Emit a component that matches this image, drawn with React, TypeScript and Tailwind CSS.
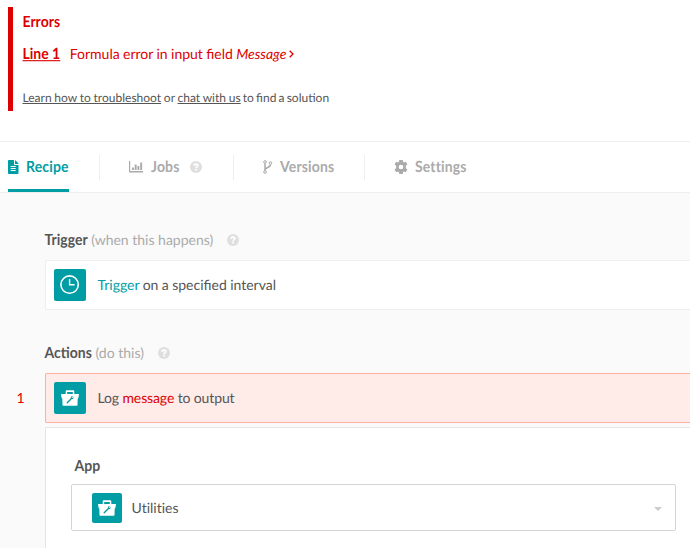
import type { ReactNode } from "react";

function FileIcon() {
  return (
    <svg className="block h-[14px] w-[11px] shrink-0" viewBox="0 0 11 14">
      <path fill="currentColor" fillRule="evenodd" d="M.8 0H6v4.2c0 .5.3.8.8.8H10.500v8.2c0 .5-.3.8-.8.8H.8c-.5 0-.8-.3-.8-.8V.8C0 .3.3 0 .8 0zM2.700 6v1h5v-1zm0 2v1h5v-1zm0 2v1h5v-1z" />
      <path fill="currentColor" d="M7 .1c.2.1.4.2.5.3l2.700 2.700c.1.100.2.300.3.900H7z" />
    </svg>
  );
}

function ChartIcon() {
  return (
    <svg className="block h-3 w-[15px] shrink-0" viewBox="0 0 15 12">
      <path fill="currentColor" d="M0 0h1.200v10H14v1.500H0zM3 6.500h1.900V9H3zM5.700 3.500h1.900V9H5.700zM8.400 5h1.900v4H8.400zM11.200 1.500h1.900V9h-1.900z" />
    </svg>
  );
}

function BranchIcon() {
  return (
    <svg className="block h-[14px] w-[10px] shrink-0" viewBox="0 0 10 14" fill="none" stroke="currentColor">
      <circle cx="2" cy="2" r="1.300" />
      <circle cx="7.500" cy="3" r="1.300" />
      <circle cx="2" cy="12" r="1.300" />
      <path strokeWidth="1.500" d="M2 3.400v7.200M7.500 4.400c0 3.600-5.100 2.600-5.500 5.600" />
    </svg>
  );
}

function GearIcon() {
  return (
    <svg className="block h-[14px] w-[14px] shrink-0" viewBox="0 0 24 24">
      <path fill="currentColor" fillRule="evenodd" d="M9 0h6l.4 3.200 1.700 1 3.200-1.300 2.700 4.700-2.700 2.100v4.600l2.700 2.100-2.700 4.700-3.200-1.300-1.700 1L15 24H9l-.4-3.200-1.700-1-3.200 1.300L1 16.400l2.700-2.100V9.700L1 7.600l2.700-4.700 3.200 1.300 1.700-1zM12 8a4 4 0 1 0 0 8 4 4 0 0 0 0-8z" />
    </svg>
  );
}

function HelpIcon() {
  return (
    <svg className="block h-3 w-3 shrink-0 text-[#dfdfdf]" viewBox="0 0 12 12">
      <circle cx="6" cy="6" r="6" fill="currentColor" />
      <path d="M4 4.700C4.200 2.400 8 2.600 7.800 4.700 7.700 5.700 6.100 5.700 6 7.200" fill="none" stroke="#fff" strokeWidth="1.700" />
      <path fill="#fff" d="M5.100 8h1.800v1.600H5.100z" />
    </svg>
  );
}

function ClockIcon() {
  return (
    <svg className="block h-5 w-5" viewBox="0 0 20 20" fill="none" stroke="#fff" strokeWidth="1.600">
      <circle cx="9.600" cy="9.600" r="8.700" />
      <path strokeWidth="1.400" d="M9.600 4v5.700h5" />
    </svg>
  );
}

function ToolboxIcon() {
  return (
    <svg className="block h-4 w-[18px]" viewBox="0 0 18 16">
      <path fill="#fff" fillRule="evenodd" d="M4.700 4V1.500C4.700.6 5.200.2 6 .2h6c.8 0 1.300.4 1.300 1.300V4H17.500c.3 0 .5.2.5.500l-.6 3.300c-.1.400-.3.600-.7.700L16.500 15c0 .4-.3.700-.7.700H2.200c-.4 0-.7-.3-.7-.7L1.300 8.500c-.4-.1-.6-.3-.7-.7L0 4.500c0-.3.2-.5.500-.5zM6.200 1.900V4h5.600V1.900z" />
      <path d="M6.200 12.800l4-4" stroke="#009da5" strokeWidth="1.300" strokeLinecap="round" />
      <path d="M12 6.100l-1.300 1.300.7.700 1.300-1.100c.3 1.400-1.100 2.500-2.600 1.900-.9-1.400.2-3.100 1.900-2.800z" fill="#009da5" />
    </svg>
  );
}

function Strong({ children }: { children: ReactNode }) {
  return <span className="inline-block origin-[50%_73%] scale-y-[1.1] font-bold">{children}</span>;
}

function Tab({ icon, label, className }: { icon: ReactNode; label: string; className: string }) {
  return (
    <div className={`flex h-[50px] items-center gap-[7px] tracking-[0.15px] ${className}`}>
      {icon}
      <Strong>{label}</Strong>
    </div>
  );
}

function Separator() {
  return <div className="h-[25px] w-px bg-[#eee]" />;
}

export default function App() {
  return (
    <main className="h-[548px] w-full overflow-hidden bg-white font-[Lato,sans-serif] text-[14px] leading-5 text-[#555] [text-rendering:geometricPrecision]">
      <section className="ml-2 flex h-[141px] flex-col pt-[7px]">
        <div className="h-[104px] border-l-[5px] border-[#dc0000] pl-[9.500px]">
          <h2 className="pt-[5px] text-[#dc0000]"><Strong>Errors</Strong></h2>
          <div className="mt-3 flex items-center text-[#dc0000]">
            <a><Strong><u>Line 1</u></Strong></a>
            <span className="ml-[9.500px] [word-spacing:-0.2px]">Formula error in input field <em>Message</em></span>
            <svg className="ml-[3px] h-2 w-[5px]" viewBox="0 0 5 8" fill="none" stroke="currentColor" strokeWidth="1.300"><path d="M.7.700L4 4 .7 7.300" /></svg>
          </div>
          <p className="mt-6 text-[12px] [word-spacing:-0.300px]">
            <a className="underline">Learn how to troubleshoot</a> or <a className="underline">chat with us</a>
            <span className="[word-spacing:-0.900px]"> to find a solution</span>
          </p>
        </div>
      </section>
      <nav className="flex h-[52px] items-center border-y border-[#eee] pl-2 text-[#aaa]">
        <Tab icon={<FileIcon />} label="Recipe" className="w-[61px] border-b-[3px] border-[#009da5] pt-[3px] text-[#009da5]" />
        <div className="ml-[30px]"><Separator /></div>
        <Tab icon={<ChartIcon />} label="Jobs" className="ml-[29px] w-[61px]" />
        <HelpIcon />
        <div className="ml-[31px]"><Separator /></div>
        <Tab icon={<BranchIcon />} label="Versions" className="ml-[29px] w-[101px]" />
        <Separator />
        <Tab icon={<GearIcon />} label="Settings" className="ml-[29px]" />
      </nav>
      <section className="h-[355px] bg-[#fafafa] pl-[45px] pt-[37px]">
        <header className="flex h-5 items-center">
          <h3 className="-ml-[0.500px]"><Strong>Trigger</Strong> <span className="text-[#aaa]">(when this happens)</span></h3>
          <div className="ml-[14px]"><HelpIcon /></div>
        </header>
        <div className="mt-[10px] flex h-[50px] items-center rounded-l-[2px] border border-r-0 border-[#eee] bg-white pl-2">
          <div className="flex h-8 w-8 items-center justify-center rounded-[2px] bg-[#009da5]"><ClockIcon /></div>
          <p className="ml-[11.500px] [word-spacing:-0.200px]"><span className="text-[#009da5]">Trigger</span> on a specified interval</p>
        </div>
        <header className="mt-[33px] flex h-5 items-center">
          <h3 className="-ml-[0.500px]"><Strong>Actions</Strong> <span className="text-[#aaa]">(do this)</span></h3>
          <div className="ml-[14px]"><HelpIcon /></div>
        </header>
        <div className="-ml-[45px] mt-[10px] flex h-[50px] items-center">
          <span className="w-[45px] pl-[16.500px] text-[#dc0000]">1</span>
          <div className="flex h-[50px] flex-1 items-center rounded-l-[2px] border border-r-0 border-[#ffb0a5] bg-[#ffebe8] pl-2">
            <div className="flex h-8 w-8 items-center justify-center rounded-[2px] bg-[#009da5]"><ToolboxIcon /></div>
            <p className="ml-[11.500px] tracking-[-0.120px]">Log <span className="text-[#dc0000]">message</span> to output</p>
          </div>
        </div>
        <div className="mt-1 h-[122px] rounded-tl-[2px] border-l border-t border-[#e5e5e5] bg-white pl-[25px] pr-[14px] pt-7">
          <h4 className="pl-[3.500px]"><Strong>App</Strong></h4>
          <div className="mt-2 flex h-[47px] items-center rounded-[2px] border border-[#d5d5d5] pl-5 pr-[13px]">
            <div className="flex h-[30px] w-[30px] items-center justify-center rounded-[2px] bg-[#009da5]"><ToolboxIcon /></div>
            <span className="ml-[9.500px] [font-variant-ligatures:none]">Utilities</span>
            <svg className="ml-auto mt-[3px] h-1 w-2" viewBox="0 0 8 4"><path fill="#ccc" d="M0 0h8L4 4z" /></svg>
          </div>
        </div>
      </section>
    </main>
  );
}
